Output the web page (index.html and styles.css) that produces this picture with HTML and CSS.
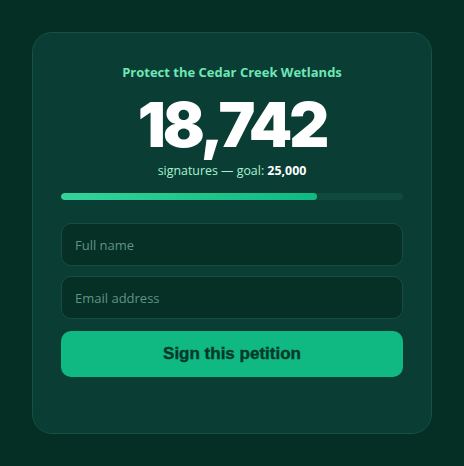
FILE: index.html
```html
<!DOCTYPE html>
<html lang="en">
<head>
  <meta charset="UTF-8" />
  <title>Sign the Petition</title>
  <link rel="stylesheet" href="styles.css">
</head>
<body>

  <div class="card">
    <h1 class="title">Protect the Cedar Creek Wetlands</h1>
    <div class="count">18,742</div>
    <p class="goal">signatures — goal: <strong>25,000</strong></p>

    <div class="track">
      <div class="fill" style="width: 74.97%"></div>
    </div>

    <form class="form">
      <input type="text" placeholder="Full name">
      <input type="email" placeholder="Email address">
      <button type="submit">Sign this petition</button>
    </form>
  </div>

</body>
</html>
```

FILE: styles.css
```css
body {
  margin: 0;
  padding: 32px;
  background: #052e25;
  font-family: "Open Sans", "Noto Sans", sans-serif;
}
.card {
  width: 400px;
  box-sizing: border-box;
  min-height: 402px;
  padding: 30px 28px;
  background: #0a3d33;
  border: 1px solid #145244;
  border-radius: 20px;
  text-align: center;
}
.title {
  margin: 0;
  font-size: 13px;
  font-weight: 700;
  color: #6ee7b7;
}
.count {
  margin-top: 14px;
  font-family: "Inter", sans-serif;
  font-size: 62px;
  font-weight: 900;
  line-height: 60px;
  color: #fff;
  letter-spacing: -3px;
}
.goal {
  margin: 7px 0 0;
  font-size: 12.4px;
  color: #a7f3d0;
}
.goal strong {
  color: #fff;
}
.track {
  margin-top: 14px;
  height: 7px;
  border-radius: 4px;
  background: #0f4a3c;
  overflow: hidden;
}
.fill {
  height: 100%;
  border-radius: 4px;
  background: linear-gradient(90deg, #34d399, #10b981);
}
.form {
  margin-top: 23px;
  display: flex;
  flex-direction: column;
  gap: 10px;
}
input {
  height: 43px;
  box-sizing: border-box;
  padding: 0 13px;
  background: #062f26;
  border: 1px solid #135043;
  border-radius: 10px;
  font-family: "Open Sans", "Noto Sans", sans-serif;
  font-size: 13px;
  color: #d1fae5;
}
input::placeholder {
  color: #5f9483;
}
button {
  margin-top: 2px;
  height: 46px;
  border: none;
  border-radius: 10px;
  background: #10b981;
  color: #04382b;
  font-family: "Liberation Sans", Arial, sans-serif;
  font-size: 17px;
  font-weight: 700;
  -webkit-text-stroke: 0.4px #04382b;
}
```
